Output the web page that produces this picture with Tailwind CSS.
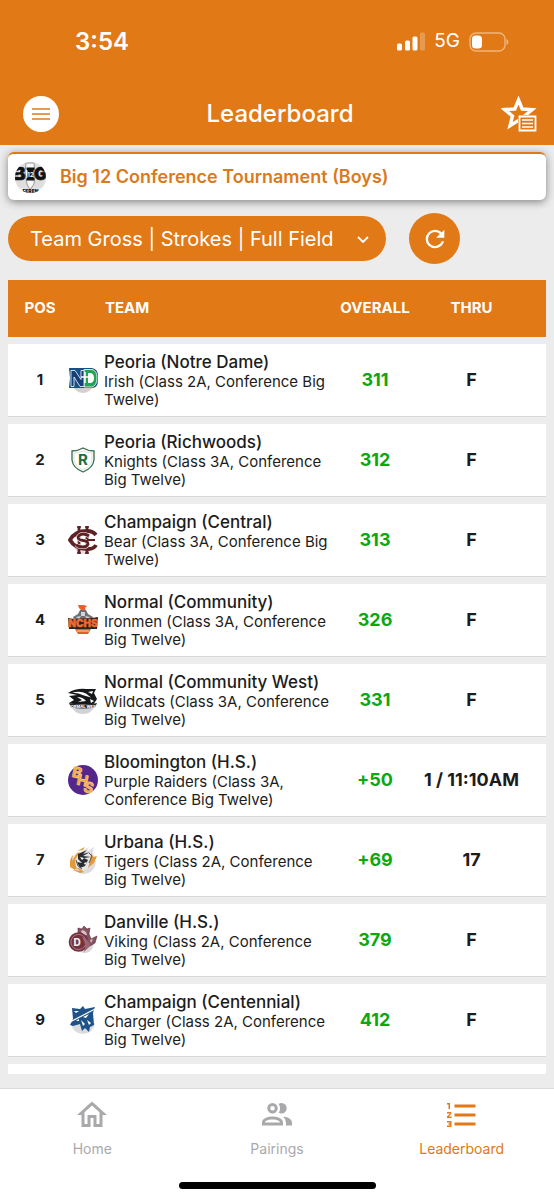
<!DOCTYPE html>
<html lang="en">
<head>
  <meta charset="UTF-8" />
  <meta name="viewport" content="width=device-width, initial-scale=1.0">
  <title>Leaderboard</title>
  <script src="https://cdn.jsdelivr.net/npm/@tailwindcss/browser@4"></script>
</head>
<body class="h-screen flex flex-col overflow-hidden bg-[#ececec] text-[#1c1c20] font-['Inter','Liberation_Sans',sans-serif]">

  <header class="shrink-0 bg-[#e17916] text-white">
    <!-- Status bar -->
    <div class="h-[83px] flex items-center justify-between pl-[75px] pr-[45px]">
      <span class="text-2xl font-semibold">3:54</span>
      <div class="flex items-center gap-[9px]">
        <svg class="w-7 h-[19px]" viewBox="0 0 28 19" fill="currentColor">
          <rect x="0" y="11.5" width="5" height="7" rx="1.5"/>
          <rect x="8" y="8.5" width="5" height="10" rx="1.5"/>
          <rect x="15.5" y="4.5" width="5" height="14" rx="1.5"/>
          <rect x="23" y="0.5" width="5" height="18" rx="1.5" opacity=".25"/>
        </svg>
        <span class="text-[19px]">5G</span>
        <svg class="w-10 h-5" viewBox="0 0 40 20" fill="none">
          <rect x="1" y="1" width="35" height="18" rx="6" stroke="#fff" stroke-opacity=".45" stroke-width="1.4"/>
          <rect x="3" y="3.5" width="10" height="13" rx="3.5" fill="#fff"/>
          <path d="M37.500 7v6c2.500-1 2.500-5 0-6z" fill="#fff" fill-opacity=".5"/>
        </svg>
      </div>
    </div>

    <!-- Title bar -->
    <div class="h-[62px] flex items-center justify-between pl-[23px] pr-[17px]">
      <button type="button" aria-label="Menu" class="size-9 rounded-full bg-white text-[#e17916] flex items-center justify-center">
        <svg class="w-[18px] h-3" viewBox="0 0 18 12" stroke="currentColor" stroke-width="1.7"><path d="M0 1h18M0 6h18M0 11h18"/></svg>
      </button>
      <h1 class="text-2xl font-medium">Leaderboard</h1>
      <button type="button" aria-label="Favorites">
        <svg class="size-9" viewBox="0 0 36 36" fill="none">
          <path d="M17.500 4l3.700 9 10 .6-7.700 6.400 2.500 9.800-8.500-5.400-8.500 5.400L11.500 20l-7.700-6.400 10-.6z" stroke="#fff" stroke-width="3.400"/>
          <path d="M17 19h19v17H17z" fill="#e17916"/>
          <path d="M18.500 20.500h16v14h-16z" stroke="#fff" stroke-width="1.800"/>
          <path d="M21 24h11M21 27.500h11M21 31h11" stroke="#fff" stroke-width="1.5"/>
        </svg>
      </button>
    </div>
  </header>

  <main class="flex-1 min-h-0 overflow-hidden mb-[14px] px-2 pt-[7px]">
    <!-- Tournament -->
    <section class="h-12 flex items-center gap-[14px] pl-[7px] bg-white rounded-md border-t-2 border-[#e17916] shadow-[0_2px_8px_rgba(0,0,0,0.45)]">
      <svg class="size-[31px]" viewBox="0 0 31 31">
        <defs><clipPath id="disc"><circle cx="15.500" cy="15.500" r="15.500"/></clipPath></defs>
        <g clip-path="url(#disc)">
          <rect width="31" height="31" fill="#dedede"/>
          <path d="M11 1h8l1 9-1 12-4 6-3-6-2-12z" fill="#f8f8f8" stroke="#999" stroke-width="1"/>
          <g font-family="Inter" font-weight="900" font-size="17" fill="#111" stroke="#111" stroke-width=".6">
            <text x="-1" y="18">B</text>
            <text x="19" y="18">G</text>
          </g>
          <path d="M11.500 5.500h8v2l-1 1v7l1 1v2h-8v-2l1-1v-7l-1-1z" fill="#111"/>
          <text x="15.500" y="14.500" font-family="Inter" font-size="6" font-weight="700" text-anchor="middle" fill="#fff">12</text>
          <path d="M0 9.500h5M0 14h5" stroke="#dedede" stroke-width="1.500"/>
          <path d="M3 26q12 2 25 0v6H3z" fill="#f5f5f5"/>
          <text x="15.500" y="31" font-family="Inter" font-size="5" font-weight="900" text-anchor="middle" fill="#111">FEREN</text>
        </g>
      </svg>
      <h2 class="text-lg font-semibold text-[#d97a20]">Big 12 Conference Tournament (Boys)</h2>
    </section>

    <!-- Filter -->
    <div class="mt-[13px] flex items-center gap-[23px]">
      <div class="relative w-[378px]">
        <select aria-label="Leaderboard view" class="w-full h-[45px] pl-[22px] pr-10 rounded-full bg-[#e17916] text-white text-xl appearance-none">
          <option>Team Gross | Strokes | Full Field</option>
        </select>
        <svg class="absolute right-[17px] top-5 w-3 h-2 pointer-events-none" viewBox="0 0 12 8" fill="none" stroke="#fff" stroke-width="1.8"><path d="M1 1l5 5 5-5"/></svg>
      </div>
      <button type="button" aria-label="Refresh" class="size-[51px] rounded-full bg-[#e17916] text-white flex items-center justify-center">
        <svg class="size-7" viewBox="0 0 24 24" fill="currentColor"><path d="M17.65 6.35C16.2 4.9 14.21 4 12 4a8 8 0 0 0-8 8 8 8 0 0 0 8 8c3.73 0 6.84-2.55 7.73-6h-2.08c-.82 2.330-3.040 4-5.650 4a6 6 0 0 1-6-6 6 6 0 0 1 6-6c1.660 0 3.140.69 4.220 1.780L13 11h7V4l-2.350 2.350z"/></svg>
      </button>
    </div>

    <!-- Standings -->
    <table class="mt-[9px] w-full table-fixed border-separate border-spacing-x-0 border-spacing-y-[7px] [&_td]:h-[73px] [&_td]:p-0 [&_td]:bg-white [&_td]:border-b [&_td]:border-[#d8d8da]">
      <colgroup>
        <col class="w-[60px]">
        <col>
        <col class="w-[84px]">
        <col class="w-[129px]">
      </colgroup>
      <thead class="text-white text-[15px]">
        <tr class="h-[57px] bg-[#e17916]">
          <th scope="col" class="p-0 pl-1">POS</th>
          <th scope="col" class="p-0 pl-[37px] text-left">TEAM</th>
          <th scope="col" class="p-0">OVERALL</th>
          <th scope="col" class="p-0 pr-5">THRU</th>
        </tr>
      </thead>
      <tbody class="text-center text-lg font-bold">
        <tr>
          <td class="text-[15px]"><span class="pl-1">1</span></td>
          <td>
            <div class="flex items-center gap-[6px] text-left font-normal">
              <svg class="size-[30px] shrink-0" viewBox="0 0 30 30">
                <path d="M4 20h22q-4 8-11 8T4 20z" fill="#d2d2d4"/>
                <path d="M1 3h23q6 1 6 8v4q0 8-6 8H1l1-10z" fill="#15508a"/>
                <path d="M16 4.500h8q5 1 5 8.500t-5 9h-8z" fill="#20a652" stroke="#fff" stroke-width=".8"/>
                <path d="M3 21.500V5.500h4l6 9v-9h3v16h-4L6 12v9.500z" fill="#173f77" stroke="#fff" stroke-width=".8"/>
                <path d="M20 8h3q3 1 3 5t-3 5h-3z" fill="#fff"/>
                <path d="M17 7v11M13 12h8" stroke="#fff" stroke-width="1.500"/>
              </svg>
              <div>
                <p class="text-[17px] font-medium leading-[22px]">Peoria (Notre Dame)</p>
                <p class="text-[15px] leading-[18px]">Irish (Class 2A, Conference Big Twelve)</p>
              </div>
            </div>
          </td>
          <td class="text-[#0ba80f]">311</td>
          <td><span class="pr-5">F</span></td>
        </tr>
        <tr>
          <td class="text-[15px]"><span class="pl-1">2</span></td>
          <td>
            <div class="flex items-center gap-[6px] text-left font-normal">
              <svg class="size-[30px] shrink-0" viewBox="0 0 30 30">
                <path d="M4 6q6 0 11-3 5 3 11 3v9q-1 8-11 12Q5 23 4 15z" fill="#fff" stroke="#376b4b" stroke-width="1.300"/>
                <path d="M6 8q5 0 9-2 4 2 9 2v7q-1 6-9 10-8-4-9-10z" fill="none" stroke="#b9cfc0" stroke-width=".6"/>
                <text x="15" y="20" font-family="Inter" font-size="15" font-weight="700" text-anchor="middle" fill="#1d6f3c">R</text>
              </svg>
              <div>
                <p class="text-[17px] font-medium leading-[22px]">Peoria (Richwoods)</p>
                <p class="text-[15px] leading-[18px]">Knights (Class 3A, Conference Big Twelve)</p>
              </div>
            </div>
          </td>
          <td class="text-[#0ba80f]">312</td>
          <td><span class="pr-5">F</span></td>
        </tr>
        <tr>
          <td class="text-[15px]"><span class="pl-1">3</span></td>
          <td>
            <div class="flex items-center gap-[6px] text-left font-normal">
              <svg class="size-[30px] shrink-0" viewBox="0 0 30 30" fill="none" stroke="#5e2226">
                <path d="M6 23h18q-4 6-9 6t-9-6z" fill="#e6dfe0" stroke="none"/>
                <path d="M28 10q-3-4-9-4Q7 6 2 15q5 9 18 9 6 0 8-4" stroke-width="3.800"/>
                <path d="M11 1v28M19 1v28" stroke-width="2.800"/>
                <path d="M9 2h4M17 2h4M9 28h4M17 28h4" stroke-width="1.600"/>
                <path d="M21 11q-3-2-6-2t-5 3q0 3 5 3.500t5 3.500q-1 3-5 3t-7-2" stroke="#fff" stroke-width="4"/>
                <path d="M21 11q-3-2-6-2t-5 3q0 3 5 3.500t5 3.500q-1 3-5 3t-7-2" stroke-width="2.800"/>
                <path d="M19 15h8" stroke-width="2"/>
              </svg>
              <div>
                <p class="text-[17px] font-medium leading-[22px]">Champaign (Central)</p>
                <p class="text-[15px] leading-[18px]">Bear (Class 3A, Conference Big Twelve)</p>
              </div>
            </div>
          </td>
          <td class="text-[#0ba80f]">313</td>
          <td><span class="pr-5">F</span></td>
        </tr>
        <tr>
          <td class="text-[15px]"><span class="pl-1">4</span></td>
          <td>
            <div class="flex items-center gap-[6px] text-left font-normal">
              <svg class="size-[30px] shrink-0" viewBox="0 0 30 30">
                <path d="M10 0q4-1 9 1l-2 2 1 3-5-1-2-2z" fill="#e5602b"/>
                <path d="M12 5h6l2 4 5 3-1 3H6l-1-3 5-3z" fill="#6b7176"/>
                <path d="M13 7h4v4h-4zM8 12l5-1-2 3zM17 11l5 1-3 2z" fill="#d0d5d8"/>
                <path d="M0 13l6 1 18-1 6-1-1 12H1z" fill="#2a2422"/>
                <text x="15" y="22" font-family="Inter" font-size="10" font-weight="900" text-anchor="middle" fill="#ee6a31" stroke="#ee6a31" stroke-width=".4">NCHS</text>
                <path d="M7 24h16l-3 5H10z" fill="#d8622f"/>
                <path d="M9 26h12" stroke="#f5d6c5" stroke-width="1"/>
              </svg>
              <div>
                <p class="text-[17px] font-medium leading-[22px]">Normal (Community)</p>
                <p class="text-[15px] leading-[18px]">Ironmen (Class 3A, Conference Big Twelve)</p>
              </div>
            </div>
          </td>
          <td class="text-[#0ba80f]">326</td>
          <td><span class="pr-5">F</span></td>
        </tr>
        <tr>
          <td class="text-[15px]"><span class="pl-1">5</span></td>
          <td>
            <div class="flex items-center gap-[6px] text-left font-normal">
              <svg class="size-[30px] shrink-0" viewBox="0 0 30 30">
                <path d="M2 19h26q-4 10-13 10T2 19z" fill="#d2d2d4"/>
                <path d="M0 8Q8 3 18 4l10 0-2 4 3 6-4 6-11-1q-7 1-13-1l5-3-5-4 8-1z" fill="#17181a"/>
                <path d="M4 7.500q9-2 14 1l5 4-7-2Q11 8 4 7.500zM9 12q6 0 9 4l-8 1 4-2zM20 7l5-1-1 3zM22 14l4 2-3 2z" fill="#fff"/>
                <path d="M1 18q14 3 28 0l-2 4.500q-12 2-24 0z" fill="#26282b"/>
                <text x="15" y="22.500" font-family="Inter" font-size="4" font-weight="800" text-anchor="middle" fill="#fff">NORMAL WEST</text>
              </svg>
              <div>
                <p class="text-[17px] font-medium leading-[22px]">Normal (Community West)</p>
                <p class="text-[15px] leading-[18px]">Wildcats (Class 3A, Conference Big Twelve)</p>
              </div>
            </div>
          </td>
          <td class="text-[#0ba80f]">331</td>
          <td><span class="pr-5">F</span></td>
        </tr>
        <tr>
          <td class="text-[15px]"><span class="pl-1">6</span></td>
          <td>
            <div class="flex items-center gap-[6px] text-left font-normal">
              <svg class="size-[30px] shrink-0" viewBox="0 0 30 30">
                <circle cx="15" cy="15" r="15" fill="#55278c"/>
                <g font-family="Inter" font-weight="800" font-size="15" fill="#f5a83c" stroke="#fbe3bd" stroke-width=".4">
                  <text x="4" y="13" transform="rotate(12 9 9)">B</text>
                  <text x="9" y="21" transform="rotate(12 15 15)">H</text>
                  <text x="16" y="28" transform="rotate(12 21 22)">S</text>
                </g>
              </svg>
              <div>
                <p class="text-[17px] font-medium leading-[22px]">Bloomington (H.S.)</p>
                <p class="text-[15px] leading-[18px]">Purple Raiders (Class 3A, Conference Big Twelve)</p>
              </div>
            </div>
          </td>
          <td class="text-[#0ba80f]">+50</td>
          <td><span class="pr-5">1 / 11:10AM</span></td>
        </tr>
        <tr>
          <td class="text-[15px]"><span class="pl-1">7</span></td>
          <td>
            <div class="flex items-center gap-[6px] text-left font-normal">
              <svg class="size-[30px] shrink-0" viewBox="0 0 30 30">
                <path d="M5 22l23-6q-1 12-12 13-7 0-11-7z" fill="#dcdcde"/>
                <path d="M3 20q-1-9 6-12l-2 5 5-6 9-5-2 4 7-4-1 6q5 7-1 13l-9 5-7-3z" fill="#e5e5e6"/>
                <path d="M2 22q-1-8 3-12l-1 6 5-8 3-1-5 8 1 7 4 4-5-1-5-3zM24 2l-1 5 2 5 4-1-3 7-6 5 2-7zM5 25l7 3 4-1-5-4zM9 6l8-4-2 3z" fill="#e39a3c"/>
                <path d="M10 9l9-4-4 4 7-2-7 4 8 1-7 1 4 2-3 6-5 2-3-6 5 1-4-4z" fill="#2b2c2f"/>
                <path d="M12 12l4 1-2 2zM16 18l3-1-2 3z" fill="#fff"/>
                <path d="M21 8l3 3-3 7M8 15l2 6 4 3" fill="none" stroke="#55575b" stroke-width="1"/>
              </svg>
              <div>
                <p class="text-[17px] font-medium leading-[22px]">Urbana (H.S.)</p>
                <p class="text-[15px] leading-[18px]">Tigers (Class 2A, Conference Big Twelve)</p>
              </div>
            </div>
          </td>
          <td class="text-[#0ba80f]">+69</td>
          <td><span class="pr-5">17</span></td>
        </tr>
        <tr>
          <td class="text-[15px]"><span class="pl-1">8</span></td>
          <td>
            <div class="flex items-center gap-[6px] text-left font-normal">
              <svg class="size-[30px] shrink-0" viewBox="0 0 30 30">
                <path d="M8 22l18-5q0 9-8 11-6 1-10-6z" fill="#d8d8da"/>
                <path d="M10 9l0-6 4 1 2-3 3 3 3-1-1 6 2 5 6-3-2 7-7 4-8-6z" fill="#845260" stroke="#5b2938" stroke-width=".6"/>
                <path d="M13 6l2-1 3 2 1 3-4 1zM22 15l3-1-2 4z" fill="#d9c2c8"/>
                <circle cx="10.500" cy="17" r="9.800" fill="#74313f"/>
                <circle cx="10.500" cy="17" r="7.600" fill="none" stroke="#b98b95" stroke-width=".8"/>
                <text x="9" y="21" font-family="Inter" font-size="10" font-weight="800" text-anchor="middle" fill="#f3e9eb">D</text>
                <path d="M14 12q7 2 8 9l-6 6q3-7-2-15z" fill="#9a6672"/>
              </svg>
              <div>
                <p class="text-[17px] font-medium leading-[22px]">Danville (H.S.)</p>
                <p class="text-[15px] leading-[18px]">Viking (Class 2A, Conference Big Twelve)</p>
              </div>
            </div>
          </td>
          <td class="text-[#0ba80f]">379</td>
          <td><span class="pr-5">F</span></td>
        </tr>
        <tr>
          <td class="text-[15px]"><span class="pl-1">9</span></td>
          <td>
            <div class="flex items-center gap-[6px] text-left font-normal">
              <svg class="size-[30px] shrink-0" viewBox="0 0 30 30">
                <path d="M3 18h24q-2 11-12 11T3 18z" fill="#dcdcde"/>
                <path d="M4 3l8 1 3-3 2 3 10-2-2 6 1 12-4 2-1 5-4-4-3 3-2-7-7 2-3-1 3-6z" fill="#1f5288"/>
                <path d="M2 17L27 4" stroke="#fff" stroke-width="1.200"/>
                <path d="M6 6l5 0-3 2zM15 12l6-3-3 4zM13 15l2 6 2-2zM19 15l2 5 2-2zM8 16l3-2 0 2z" fill="#fff"/>
              </svg>
              <div>
                <p class="text-[17px] font-medium leading-[22px]">Champaign (Centennial)</p>
                <p class="text-[15px] leading-[18px]">Charger (Class 2A, Conference Big Twelve)</p>
              </div>
            </div>
          </td>
          <td class="text-[#0ba80f]">412</td>
          <td><span class="pr-5">F</span></td>
        </tr>
        <tr><td></td><td></td><td></td><td></td></tr>
      </tbody>
    </table>
  </main>

  <!-- Bottom tabs -->
  <nav class="shrink-0 h-28 bg-white border-t border-[#dcdcdc] flex flex-col items-center justify-between pb-[11px] text-[#a9a9ac]">
    <div class="w-full grid grid-cols-3 text-sm">
      <a href="#" class="flex flex-col items-center gap-[6px] pt-2">
        <svg class="size-9" viewBox="0 0 24 24" fill="currentColor"><path d="M12 5.690l5 4.500V18h-2v-6H9v6H7v-7.810l5-4.500M12 3L2 12h3v8h6v-6h2v6h6v-8h3L12 3z"/></svg>
        Home
      </a>
      <a href="#" class="flex flex-col items-center gap-[6px] pt-2">
        <svg class="size-9" viewBox="0 0 24 24" fill="currentColor"><path d="M13.070 10.410a5 5 0 0 0 0-5.820A3.390 3.390 0 0 1 15 4a3.500 3.500 0 0 1 0 7 3.390 3.390 0 0 1-1.930-.59M5.500 7.500A3.500 3.500 0 1 1 9 11a3.500 3.500 0 0 1-3.500-3.500m2 0A1.500 1.500 0 1 0 9 6a1.500 1.500 0 0 0-1.500 1.500M16 17v2H2v-2s0-4 7-4 7 4 7 4m-2 0c-.14-.78-1.330-2-5-2s-4.930 1.310-5 2m11.950-4A5.320 5.320 0 0 1 18 17v2h4v-2s0-3.630-6.060-4z"/></svg>
        Pairings
      </a>
      <a href="#" class="flex flex-col items-center gap-[6px] pt-2 text-[#e17916]">
        <svg class="size-9" viewBox="0 0 24 24" fill="currentColor"><path d="M7 13v-2h14v2H7m0 6v-2h14v2H7M7 7V5h14v2H7M3 8V5H2V4h2v4H3m-1 9v-1h3v4H2v-1h2v-.5H3v-1h1V17H2m2.250-7a.75.75 0 0 1 .75.750c0 .2-.08.39-.21.520L3.120 13H5v1H2v-.92L4 11H2v-1h2.250z"/></svg>
        Leaderboard
      </a>
    </div>
    <div class="w-[197px] h-[7px] rounded-full bg-black"></div>
  </nav>

</body>
</html>
